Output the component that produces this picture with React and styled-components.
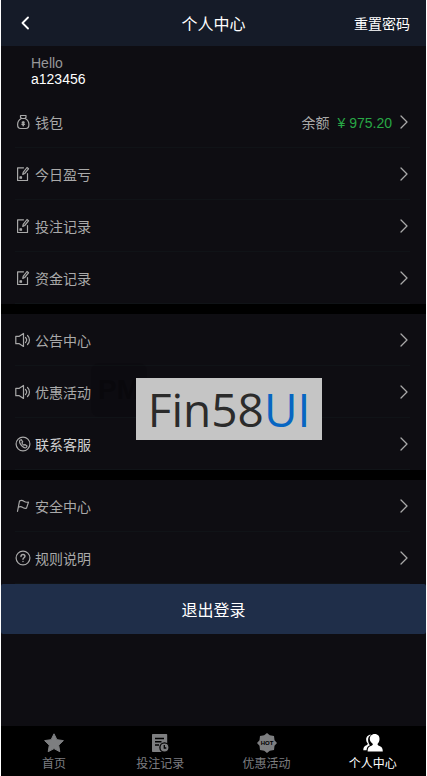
import React from "react";
import styled, { createGlobalStyle } from "styled-components";

const stroke = {
  fill: "none",
  stroke: "currentColor",
  strokeLinecap: "round",
  strokeLinejoin: "round",
};

const WalletIcon = () => (
  <svg width="16" height="16" viewBox="0 0 16 16" {...stroke} strokeWidth="1.2">
    <path d="M5.500 1.500h5.500v1.800l-1 1.200H6.500l-1-1.200z" />
    <path d="M6.300 4.500C3.500 6 2.600 8.300 2.600 10.500c0 2.500 1.300 4 3 4h5.300c1.700 0 3-1.500 3-4 0-2.200-.9-4.500-3.700-6" />
    <path d="M8.200 7.800v4M7.300 8.300h1.800M7 10.300h2.400" strokeWidth="1.500" />
  </svg>
);

const RecordIcon = () => (
  <svg width="16" height="16" viewBox="0 0 16 16" {...stroke} strokeWidth="1.200">
    <path d="M8.500 1.800H2.600v12.700h9.900V7.500" />
    <path d="m12 1.500 1.500 1.300L9.700 7.500l-1.900.9.400-2z" />
    <path d="M5 10.800h1.500v1.400H5z" fill="currentColor" />
  </svg>
);

const SpeakerIcon = () => (
  <svg width="16" height="16" viewBox="0 0 16 16" {...stroke} strokeWidth="1.200">
    <path d="M.8 4.300h3.500l4.200-2.800v13l-4.200-2.800H.8z" />
    <path d="M10.500 5.500c1.300 1.400 1.300 3.600 0 5M12.500 3.500c2.600 2.500 2.600 6.500 0 9" />
  </svg>
);

const PhoneIcon = () => (
  <svg width="16" height="16" viewBox="0 0 16 16" {...stroke} strokeWidth="1.200">
    <circle cx="8" cy="8" r="6.900" />
    <path d="m4.900 4.300 1.300-.6 1.500 2.200-.8 1c.4 1 1.100 1.800 2 2.300l1-.7 2.100 1.600-.7 1.300c-1 .8-2.700.2-4.300-1.400S4.200 5.600 4.900 4.300z" />
  </svg>
);

const FlagIcon = () => (
  <svg width="16" height="16" viewBox="0 0 16 16" {...stroke} strokeWidth="1.200">
    <path d="M2.500 13.500 4.500 3c2-1.200 3.300-.6 4.400.3 1.300 1 2.600 1.200 4.600.8l-2 6c-1.700.5-3 .1-4.100-.8-1.200-.8-2.200-.9-4.100-.1" />
  </svg>
);

const HelpIcon = () => (
  <svg width="16" height="16" viewBox="0 0 16 16" {...stroke} strokeWidth="1.200">
    <circle cx="8" cy="8" r="6.900" />
    <path d="M6 6.500C6 5.200 6.800 4.500 8 4.500s2 .7 2 1.800c0 1.300-2 1.500-2 3M8 11.400v.2" strokeWidth="1.400" />
  </svg>
);

const ChevronRight = () => (
  <svg width="8" height="14" viewBox="0 0 8 14" {...stroke} strokeWidth="1.300">
    <path d="m1 1 6 6-6 6" />
  </svg>
);

const BackIcon = () => (
  <svg width="8" height="14" viewBox="0 0 8 14" {...stroke} strokeWidth="1.800">
    <path d="M7 1.500 1.500 7 7 12.500" />
  </svg>
);

const StarIcon = () => (
  <svg width="20" height="20" viewBox="0 0 20 20" fill="currentColor">
    <path d="m10 .8 2.900 5.900 6.500.9-4.700 4.600 1.100 6.500L10 15.600l-5.800 3.100 1.100-6.500L.6 7.600l6.500-.9z" stroke="currentColor" strokeLinejoin="round" />
  </svg>
);

const BetIcon = () => (
  <svg width="20" height="20" viewBox="0 0 20 20">
    <path d="M3 1h13.200c.7 0 1 .4 1 1v17H3c-.7 0-1-.4-1-1V2c0-.7.3-1 1-1z" fill="currentColor" />
    <path d="M5 5.500h9M5 8.800h6.500M5 12h4" stroke="#000" strokeWidth="1.400" />
    <circle cx="14.500" cy="14.500" r="4.600" fill="currentColor" stroke="#000" strokeWidth="1.300" />
    <path d="M14.300 12v3h2" fill="none" stroke="#000" strokeWidth="1.300" />
  </svg>
);

const HotIcon = () => (
  <svg width="20" height="20" viewBox="0 0 20 20">
    <path d="m10 0 2.800 2.300 4.200.7.500 4.300L20 10l-2.500 2.700L17 17l-4.200.7L10 20l-2.800-2.300L3 17l-.5-4.300L0 10l2.500-2.700L3 3l4.200-.7z" fill="currentColor" />
    <text x="10" y="12" textAnchor="middle" fontSize="6" fontWeight="700" fontFamily="Liberation Sans, sans-serif" fill="#000">HOT</text>
  </svg>
);

const UserIcon = () => (
  <svg width="20" height="20" viewBox="0 0 20 20" fill="currentColor">
    <path d="M8.300 1.700C5 1.400 3 3.800 3.200 6.800c.1 1.700.7 2.800 1.600 3.700-.1 1-.7 1.500-2 2.100C1.200 13.500.3 14.500.3 17.300h3.200c.2-2.700 1.300-4 3.400-5-1.200-1.800-1.900-3.600-1.800-5.800.1-2 .9-3.800 3.200-4.800z" />
    <path d="M11.700 1c3.400 0 5 2.300 4.800 5.200-.1 2.200-.9 3.700-2 4.700.1 1.200.9 1.500 2 2 2.300.9 3.300 2.200 3.300 5.600H4.600c0-3.400 1.100-4.700 3.100-5.600 1.300-.5 2.100-.9 2.200-2C8.600 9.900 6.900 8.400 6.800 6.200 6.700 3.300 8.500 1 11.700 1z" />
  </svg>
);

const groups = [
  [
    { icon: <WalletIcon />, label: "钱包", balance: "975.20" },
    { icon: <RecordIcon />, label: "今日盈亏" },
    { icon: <RecordIcon />, label: "投注记录" },
    { icon: <RecordIcon />, label: "资金记录" },
  ],
  [
    { icon: <SpeakerIcon />, label: "公告中心" },
    { icon: <SpeakerIcon />, label: "优惠活动" },
    { icon: <PhoneIcon />, label: "联系客服", bright: true },
  ],
  [
    { icon: <FlagIcon />, label: "安全中心" },
    { icon: <HelpIcon />, label: "规则说明" },
  ],
];

const tabs = [
  { icon: <StarIcon />, label: "首页" },
  { icon: <BetIcon />, label: "投注记录" },
  { icon: <HotIcon />, label: "优惠活动" },
  { icon: <UserIcon />, label: "个人中心", active: true },
];

const MenuRow = ({ icon, label, balance, bright }) => (
  <li>
    <S_RowLink href="#">
      {icon}
      <S_RowLabel $bright={bright}>{label}</S_RowLabel>
      {balance && (
        <span>
          余额 <S_Amount>¥ {balance}</S_Amount>
        </span>
      )}
      <ChevronRight />
    </S_RowLink>
  </li>
);

const App = () => {
  return (
    <S_Page>
      <GlobalStyle />
      <S_Header>
        <S_BackButton type="button" aria-label="返回">
          <BackIcon />
        </S_BackButton>
        <h1>个人中心</h1>
        <S_ResetLink href="#">重置密码</S_ResetLink>
      </S_Header>

      <S_Main>
        <S_Greeting>
          <p>Hello</p>
          <strong>a123456</strong>
        </S_Greeting>
        <S_Groups>
          {groups.map((rows, index) => (
            <S_Group key={index}>
              {rows.map((row) => (
                <MenuRow key={row.label} {...row} />
              ))}
            </S_Group>
          ))}
          <S_Watermark>PM</S_Watermark>
          <S_Brand>
            Fin58<span>UI</span>
          </S_Brand>
        </S_Groups>
        <S_LogoutButton type="button">退出登录</S_LogoutButton>
      </S_Main>

      <S_TabBar>
        {tabs.map((tab) => (
          <S_Tab key={tab.label} href="#" $active={tab.active}>
            {tab.icon}
            {tab.label}
          </S_Tab>
        ))}
      </S_TabBar>
    </S_Page>
  );
};

export default App;

const GlobalStyle = createGlobalStyle`
  * {
    box-sizing: border-box;
  }

  body {
    margin: 0;
    background: #fff;
    font-family: "Liberation Sans", "Noto Sans CJK SC", sans-serif;
    font-size: 14px;
  }

  h1, p, ul {
    margin: 0;
    padding: 0;
  }

  ul {
    list-style: none;
  }

  a {
    text-decoration: none;
  }

  button {
    border: 0;
    font-family: inherit;
    cursor: pointer;
  }

  svg {
    display: block;
    flex-shrink: 0;
  }
`;

const S_Page = styled.div`
  display: flex;
  flex-direction: column;
  min-height: 100vh;
  margin: 0 1px;
  background: #0e0d12;
`;

const S_Header = styled.header`
  display: grid;
  grid-template-columns: 1fr auto 1fr;
  align-items: center;
  height: 46px;
  padding: 0 16px;
  background: #151b28;
  color: #fff;

  h1 {
    font-size: 16px;
    font-weight: 400;
  }
`;

const S_BackButton = styled.button`
  justify-self: start;
  padding: 4px;
  background: none;
  color: #fff;
`;

const S_ResetLink = styled.a`
  justify-self: end;
  color: #fff;
`;

const S_Main = styled.main`
  flex: 1;
`;

const S_Greeting = styled.div`
  height: 50px;
  padding: 9px 30px;
  line-height: 16px;
  color: #969799;

  strong {
    display: block;
    color: #fff;
    font-weight: 400;
  }
`;

const S_Groups = styled.div`
  position: relative;
  display: flex;
  flex-direction: column;
  gap: 10px;
  background: #000;
`;

const S_Group = styled.ul`
  padding: 0 16px 0 14px;
  background: #0e0d12;
`;

const S_RowLink = styled.a`
  display: flex;
  align-items: center;
  gap: 4px;
  height: 52px;
  padding-right: 2px;
  border-bottom: 1px solid #101317;
  color: #a9a9a9;

  svg:last-child {
    margin-left: 4px;
  }
`;

const S_RowLabel = styled.span`
  flex: 1;
  color: ${(props) => (props.$bright ? "#d0d0d0" : "inherit")};
`;

const S_Amount = styled.span`
  margin-left: 4px;
  color: #28a745;
`;

/* faint badge behind the brand plate */
const S_Watermark = styled.div`
  position: absolute;
  top: 267px;
  left: 90px;
  width: 56px;
  height: 54px;
  border-radius: 8px;
  background: rgba(0, 0, 0, 0.1);
  color: rgba(0, 0, 0, 0.25);
  font-size: 28px;
  font-weight: 700;
  line-height: 54px;
  text-align: center;
  pointer-events: none;
`;

/* floats over the middle of the menu */
const S_Brand = styled.div`
  position: absolute;
  top: 282px;
  left: 135px;
  display: flex;
  align-items: center;
  justify-content: center;
  width: 186px;
  height: 62px;
  background: #c5c5c5;
  color: #2b2b2b;
  font-family: "Open Sans", sans-serif;
  font-size: 46px;
  line-height: 62px;

  span {
    color: #0766c2;
  }
`;

const S_LogoutButton = styled.button`
  display: block;
  width: 100%;
  height: 50px;
  border-radius: 2px;
  background: #1f2e49;
  color: #fff;
  font-size: 16px;
`;

const S_TabBar = styled.nav`
  position: sticky;
  bottom: 0;
  display: flex;
  height: 50px;
  background: #000;
`;

const S_Tab = styled.a`
  flex: 1;
  display: flex;
  flex-direction: column;
  align-items: center;
  justify-content: flex-end;
  gap: 4px;
  padding-bottom: 5px;
  color: ${(props) => (props.$active ? "#fff" : "#7d7e80")};
  font-size: 12px;
  line-height: 14px;
`;
